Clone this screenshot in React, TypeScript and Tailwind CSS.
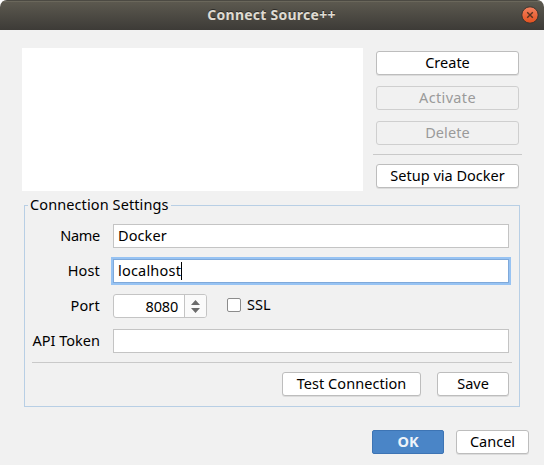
import type { ReactNode } from "react";

function T({ children, className = "" }: { children: ReactNode; className?: string }) {
  return <span className={`whitespace-nowrap ${className}`}>{children}</span>;
}

function Button({ children, className = "", disabled = false }: { children: ReactNode; className?: string; disabled?: boolean }) {
  return (
    <button
      disabled={disabled}
      className={`flex h-6 shrink-0 items-center justify-center rounded-[3px] border pb-[3px] ${
        disabled ? "border-[#cfcfcf] bg-[#f1f1f1] text-[#9a9a9a]" : "border-[#bdbdbd] bg-white text-black shadow-[0_1px_0_#dcdcdc]"
      } ${className}`}
    >
      {children}
    </button>
  );
}

function Row({ label, children, className = "" }: { label: ReactNode; children: ReactNode; className?: string }) {
  return (
    <div className={`flex h-6 items-center ${className}`}>
      <div className="mr-[13px] flex w-[75px] shrink-0 justify-end pb-[3px]">{label}</div>
      {children}
    </div>
  );
}

export default function App() {
  return (
    <div className="h-[465px] w-[544px] overflow-hidden bg-white font-['Noto_Sans',sans-serif] text-[14.5px] leading-5 text-black">
      <div className="flex h-full flex-col overflow-hidden rounded-t-[7px] bg-[#f1f1f1]">
        <header className="flex h-[30px] shrink-0 items-center border-t border-[#4c4a43] bg-gradient-to-b from-[#5d5a50] to-[#3d3b37] shadow-[inset_0_1px_0_#6a675b]">
          <div className="w-[22px]" />
          <h1 className="flex flex-1 justify-center pb-[2px] text-[14px] font-bold text-[#dfdbd2] [text-shadow:0_-1px_0_#2d2c28]">
            <T className="tracking-[0.25px]">Connect Source++</T>
          </h1>
          <svg className="mr-[5px] mb-px h-[18px] w-[18px]" viewBox="0 0 18 18">
            <defs>
              <linearGradient id="close" x1="0" y1="0" x2="0" y2="1">
                <stop offset="0" stopColor="#f48260" />
                <stop offset="1" stopColor="#e2501e" />
              </linearGradient>
            </defs>
            <circle cx="9" cy="9" r="8.2" fill="url(#close)" stroke="#37352f" strokeWidth="1" />
            <path d="M6.2 6.2L11.8 11.8M11.8 6.2L6.2 11.8" stroke="#57321f" strokeWidth="1.4" />
          </svg>
        </header>

        <main className="flex flex-1 flex-col">
          <section className="flex h-[166px] shrink-0 pt-[18px] pl-[22px]">
            <div className="h-[143px] w-[341px] bg-white" />
            <div className="ml-2.5 flex w-[149px] flex-col pt-[3px]">
              <Button className="mx-[3px]"><T>Create</T></Button>
              <Button disabled className="mx-[3px] mt-[11px]"><T className="tracking-[0.35px]">Activate</T></Button>
              <Button disabled className="mx-[3px] mt-[11px]"><T className="tracking-[0.1px]">Delete</T></Button>
              <div className="mt-[9px] h-px shrink-0 bg-[#c9c9c9]" />
              <Button className="mx-[3px] mt-[9px]"><T>Setup via Docker</T></Button>
            </div>
          </section>

          <fieldset className="ml-6 h-[211px] w-[496px] shrink-0 border border-[#b8cfe5]">
            <legend className="ml-[3px] h-[19px] w-[143px] pl-0.5 leading-[16px]"><T className="tracking-[0.1px]">Connection Settings</T></legend>
            <div className="pt-[9px]">
              <Row label={<T className="tracking-[-0.3px]">Name</T>}>
                <div className="flex h-6 w-[396px] items-center border border-[#c4c4c4] bg-white pb-[3px] pl-1"><T className="tracking-[0.1px]">Docker</T></div>
              </Row>
              <Row className="mt-[11px]" label={<T className="tracking-[0.15px]">Host</T>}>
                <div className="flex h-6 w-[396px] items-center border border-[#7fa9da] bg-white pl-1 shadow-[0_0_0_2px_#97c3f3]">
                  <T className="pb-[3px] tracking-[0.2px]">localhost</T>
                  <span className="h-[18px] w-px bg-black" />
                </div>
              </Row>
              <Row className="mt-[11px]" label={<T className="tracking-[0.2px]">Port</T>}>
                <div className="flex h-6 w-[94px] overflow-hidden rounded-[3px] border border-[#c4c4c4] bg-white">
                  <div className="flex w-[71px] items-center justify-end border-r border-[#c4c4c4] pr-[6px] pb-px"><T className="tracking-[-0.2px]">8080</T></div>
                  <div className="flex flex-1 items-center justify-center bg-[#fafafa]">
                    <svg className="h-[13px] w-[9px]" viewBox="0 0 9 13">
                      <path d="M0 5L4.5 0L9 5ZM0 8H9L4.5 13Z" fill="#6b6b6b" />
                    </svg>
                  </div>
                </div>
                <div className="mr-1.5 mb-[2px] ml-5 h-3.5 w-3.5 rounded-[2px] border border-[#8c8c8c] bg-white" />
                <div className="pb-[5px]"><T>SSL</T></div>
              </Row>
              <Row className="mt-[11px]" label={<T>API Token</T>}>
                <div className="h-6 w-[396px] border border-[#c4c4c4] bg-white" />
              </Row>
              <div className="mt-[9px] ml-[7px] h-px w-[480px] bg-[#c9c9c9]" />
              <div className="mt-[9px] mr-2.5 flex justify-end gap-4">
                <Button className="w-[139px]"><T className="tracking-[0.05px]">Test Connection</T></Button>
                <Button className="w-[72px]"><T>Save</T></Button>
              </div>
            </div>
          </fieldset>

          <footer className="mt-[23px] flex justify-end gap-3 pr-[15px]">
            <button className="flex h-6 w-[72px] items-center justify-center rounded-[2px] border border-[#3d74b4] bg-[#4a85c7] pb-[3px] font-bold text-[#eef3f9]"><T>OK</T></button>
            <Button className="w-[73px]"><T>Cancel</T></Button>
          </footer>
        </main>
      </div>
    </div>
  );
}
